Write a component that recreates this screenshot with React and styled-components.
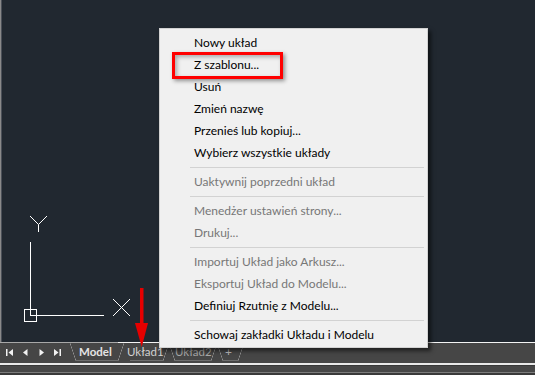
import { createGlobalStyle, styled } from 'styled-components';

const Global = createGlobalStyle`
    body {
        margin: 0;
        background: #212830;
    }
`;

const Screen = styled.div`
    position: relative;
    width: 535px;
    height: 375px;
    overflow: hidden;
    display: flex;
    flex-direction: column;
    font-family: Lato, "Open Sans", sans-serif;
`;

const Canvas = styled.div`
    position: relative;
    height: 342px;
    flex-shrink: 0;
    background: #212830;
    box-shadow: inset 1px 0 #8a8a8a, inset 2px 0 #4b5058;
`;

const CanvasEdge = styled.div`
    height: 1px;
    background: linear-gradient(to right, #a8a8a8 118px, #f4f4f4 118px);
`;

const TabBar = styled.div`
    height: 20px;
    display: flex;
    align-items: flex-start;
    background: #464646;
    padding-left: 1px;
`;

const NavGroup = styled.div`
    display: flex;
    height: 19px;
    margin-right: 5px;
`;

const NavButton = styled.div`
    width: 16px;
    height: 19px;
    display: flex;
    align-items: center;
    justify-content: center;
`;

const Tab = styled.div`
    position: relative;
    box-sizing: border-box;
    width: ${p => p.$w}px;
    height: 18px;
    padding-left: ${p => p.$pad}px;
    font-size: 11.5px;
    line-height: 18px;
    font-weight: ${p => (p.$active ? 700 : 400)};
    color: ${p => p.$color};
    white-space: nowrap;
    background: linear-gradient(#6e6e6e, #6e6e6e) no-repeat 6px 100% / calc(100% - 12px) 1px;

    &::before {
        content: '';
        display: ${p => (p.$noLeft ? 'none' : 'block')};
        position: absolute;
        left: 0;
        top: 0;
        width: 6px;
        height: 100%;
        background: linear-gradient(to top right, transparent calc(50% - 0.6px), #909090 50%, transparent calc(50% + 0.6px));
    }

    &::after {
        content: '';
        position: absolute;
        right: 0;
        top: 0;
        width: 6px;
        height: 100%;
        background: linear-gradient(to bottom right, transparent calc(50% - 0.6px), #909090 50%, transparent calc(50% + 0.6px));
    }
`;

const PlusText = styled.span`
    display: block;
    text-align: center;
    padding-right: 4px;
    font-size: 12px;
`;

const WhiteRule = styled.div`
    height: 2px;
    background: #e9e9e9;
`;

const StatusStrip = styled.div`
    flex: 1;
    background: #474747;
    border-top: 1px solid #383838;
    border-bottom: 2px solid #3a3a3a;
    box-shadow: inset 0 -1px #7c7c7c;
`;

const Menu = styled.div`
    position: absolute;
    left: 159px;
    top: 28px;
    width: 269px;
    box-sizing: border-box;
    padding: 3px 0 1px;
    background: #f0f0f0;
    border: 1px solid #d2d2d2;
    box-shadow: 3px 3px 4px rgba(0, 0, 0, 0.55);
    z-index: 2;
`;

const Item = styled.div`
    position: relative;
    height: 22px;
    line-height: 22px;
    padding-left: 34px;
    font-size: 12px;
    color: ${p => (p.$off ? '#777777' : '#000000')};
    white-space: nowrap;
`;

const Highlight = styled.div`
    position: absolute;
    left: 12px;
    top: -2px;
    width: 111px;
    height: 27px;
    box-sizing: border-box;
    border: 3px solid #ff0000;
    box-shadow: 2px 2px 4px rgba(0, 0, 0, 0.4), inset 2px 2px 4px rgba(0, 0, 0, 0.3);
`;

const Separator = styled.div`
    height: 1px;
    margin: 3px 3px 3px 30px;
    background: #d2d2d2;
`;

const Drawing = styled.svg`
    position: absolute;
    left: ${p => p.$x}px;
    top: ${p => p.$y}px;
    overflow: visible;
`;

const entries = [
    { t: 'Nowy układ' },
    { t: 'Z szablonu...', mark: true },
    { t: 'Usuń' },
    { t: 'Zmień nazwę' },
    { t: 'Przenieś lub kopiuj...' },
    { t: 'Wybierz wszystkie układy' },
    'sep',
    { t: 'Uaktywnij poprzedni układ', off: true },
    'sep',
    { t: 'Menedżer ustawień strony...', off: true },
    { t: 'Drukuj...', off: true },
    'sep',
    { t: 'Importuj Układ jako Arkusz...', off: true },
    { t: 'Eksportuj Układ do Modelu...', off: true },
    { t: 'Definiuj Rzutnię z Modelu...' },
    'sep',
    { t: 'Schowaj zakładki Układu i Modelu' },
];

function NavIcon({ kind }) {
    const tri = {
        first: 'M7 0 L7 7 L2.5 3.5 Z',
        prev: 'M5.5 0 L5.5 7 L1 3.5 Z',
        next: 'M1.5 0 L1.5 7 L6 3.5 Z',
        last: 'M0 0 L0 7 L4.5 3.5 Z',
    }[kind];
    return (
        <svg width="7" height="7" viewBox="0 0 7 7">
            <path d={tri} fill="#f2f2f2" />
            {kind === 'first' && <rect x="0" y="0" width="1.5" height="7" fill="#f2f2f2" />}
            {kind === 'last' && <rect x="5.5" y="0" width="1.5" height="7" fill="#f2f2f2" />}
        </svg>
    );
}

export default function App() {
    return (
        <Screen>
            <Global />
            <Canvas>
                {/* UCS icon */}
                <Drawing $x={20} $y={210} width="115" height="115" viewBox="20 210 115 115">
                    <g stroke="#ffffff" strokeWidth="1" fill="none">
                        <path d="M30 216 L38.5 224.5 L47 216 M38.5 224.5 V232" />
                        <path d="M30.5 242 V315.5 H104" shapeRendering="crispEdges" />
                        <rect x="24.5" y="309.5" width="12" height="12" shapeRendering="crispEdges" />
                        <path d="M113 299 L130 316 M130 299 L113 316" />
                    </g>
                </Drawing>
            </Canvas>
            <CanvasEdge />
            <TabBar>
                <NavGroup>
                    <NavButton><NavIcon kind="first" /></NavButton>
                    <NavButton><NavIcon kind="prev" /></NavButton>
                    <NavButton><NavIcon kind="next" /></NavButton>
                    <NavButton><NavIcon kind="last" /></NavButton>
                </NavGroup>
                <Tab $w={54} $pad={9} $active $color="#e4e4e4">Model</Tab>
                <Tab $w={45} $pad={3} $noLeft $color="#d2d2d2">Układ1</Tab>
                <Tab $w={48} $pad={6} $color="#a9a9a9">Układ2</Tab>
                <Tab $w={27} $pad={0} $color="#bcbcbc"><PlusText>+</PlusText></Tab>
            </TabBar>
            <WhiteRule />
            <StatusStrip />

            <Menu>
                {entries.map((e, i) =>
                    e === 'sep' ? (
                        <Separator key={i} />
                    ) : (
                        <Item key={i} $off={e.off}>
                            {e.t}
                            {e.mark && <Highlight />}
                        </Item>
                    )
                )}
            </Menu>

            {/* red pointer arrow */}
            <Drawing $x={134} $y={286} width="16" height="62" viewBox="134 286 16 62">
                <rect x="140" y="288" width="3.5" height="37" fill="#e60000" />
                <path d="M135 323 L148 323 L141.7 347 Z" fill="#e60000" />
            </Drawing>
        </Screen>
    );
}
